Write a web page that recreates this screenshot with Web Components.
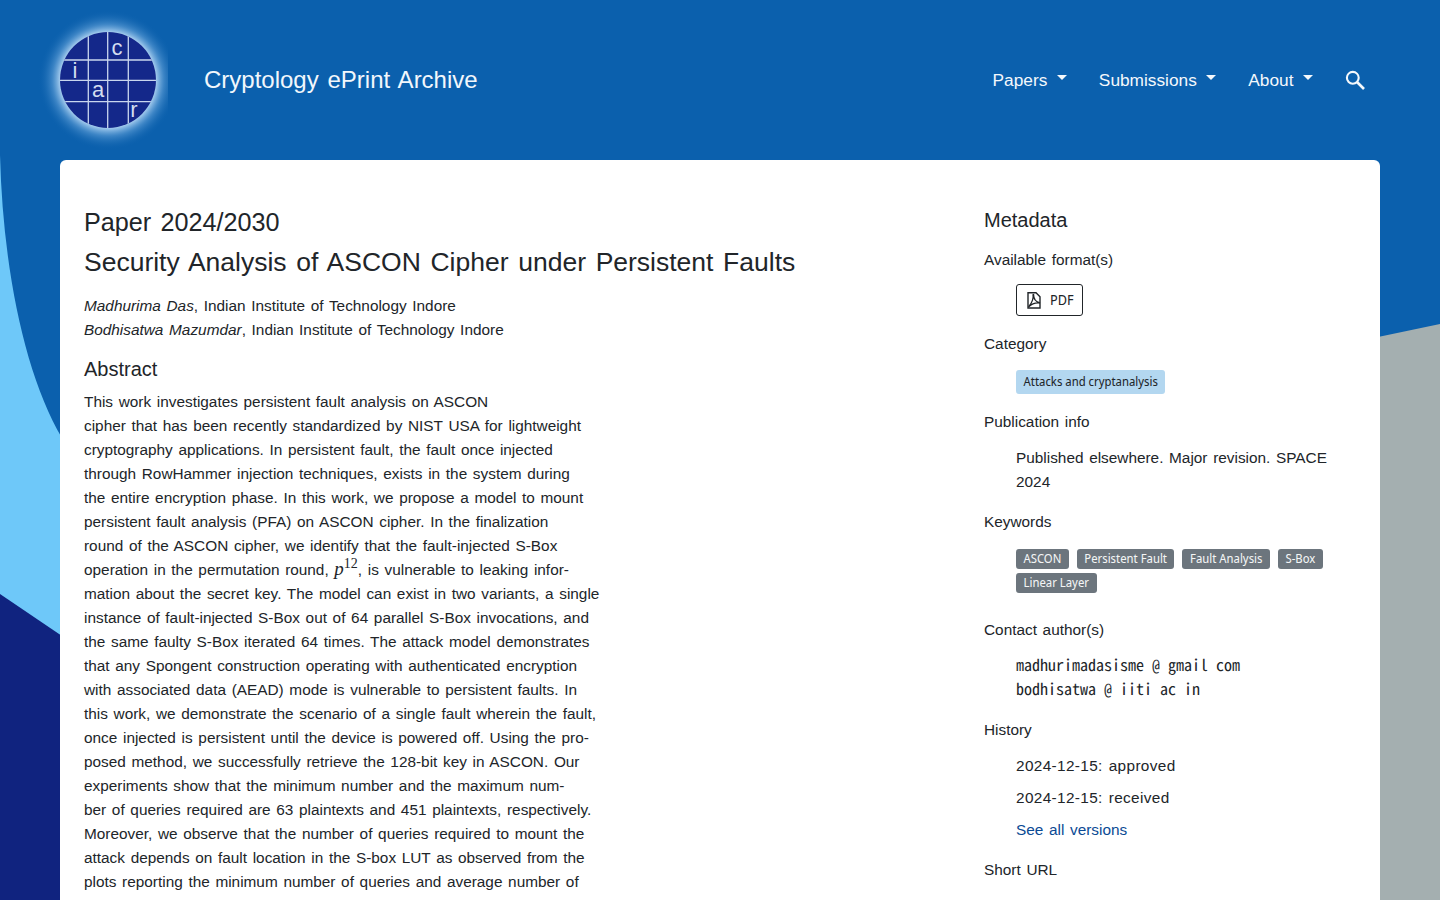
<!DOCTYPE html>
<html lang="en"><head><meta charset="utf-8"><title>Cryptology ePrint Archive</title>
<style>
html,body{margin:0;padding:0;height:900px;overflow:hidden}
body{background:#0b60ad;font-family:"Liberation Sans",Arial,sans-serif;font-size:15.36px;word-spacing:1.4px;line-height:24px;color:#212529;position:relative}
</style></head><body>
<template id="t-bg"><style>:host{position:absolute;inset:0;display:block;z-index:0}svg{display:block}</style>
<svg width="1440" height="900" viewBox="0 0 1440 900"><rect width="1440" height="900" fill="#0b60ad"/>
<path d="M0 155C3 270 25 375 62 438L62 640L0 596Z" fill="#6ec8f9"/>
<path d="M0 594L62 636V900H0Z" fill="#10237f"/>
<path d="M1378 337L1440 324V900H1378Z" fill="#a4afb0"/></svg></template>
<template id="t-logo"><style>:host{display:block;width:144px;height:160px;flex:none}svg{display:block}text{font-family:"Liberation Sans",Arial,sans-serif;fill:#d3ddf0;font-size:22px;text-anchor:middle}</style>
<svg width="144" height="160" viewBox="0 0 144 160"><defs><radialGradient id="g"><stop offset="0.68" stop-color="#a9cff0"/><stop offset="0.8" stop-color="#5d9dd6" stop-opacity=".6"/><stop offset="1" stop-color="#0b60ad" stop-opacity="0"/></radialGradient><clipPath id="c"><circle cx="84" cy="80" r="48"/></clipPath></defs>
<circle cx="84" cy="80" r="70" fill="url(#g)"/><circle cx="84" cy="80" r="48" fill="#14288a"/>
<g clip-path="url(#c)" stroke="#c9d6ee" stroke-width="1.3"><path d="M64.3 30V130M83.7 30V130M104.3 30V130M34 60H134M34 80.3H134M34 101.7H134"/></g>
<text x="93" y="55">c</text><text x="51" y="78">i</text><text x="74" y="97">a</text><text x="110" y="117">r</text></svg></template>
<template id="t-nav"><style>:host{display:inline-flex;align-items:center;color:#f4f8fc;font-size:17.3px;line-height:24px;word-spacing:0}
i{display:inline-block;margin-left:9.5px;width:0;height:0;border-top:5.3px solid #f4f8fc;border-left:5.3px solid transparent;border-right:5.3px solid transparent;position:relative;top:-3px}</style><slot></slot><i></i></template>
<template id="t-header"><style>:host{display:flex;align-items:center;height:160px;padding-left:24px;padding-right:75px;color:#fff}
.t{font-size:24px;word-spacing:2.1px;margin-left:36px;color:#f2f7fc}.r{margin-left:auto;display:flex;align-items:center;gap:32px}svg{display:block}</style>
<ac-logo></ac-logo><div class="t">Cryptology ePrint Archive</div><div class="r"><ac-nav>Papers</ac-nav><ac-nav>Submissions</ac-nav><ac-nav>About</ac-nav>
<svg width="20" height="20" viewBox="0 0 20 20" fill="none" stroke="#f4f8fc" stroke-width="2.1"><circle cx="7.8" cy="7.8" r="5.9"/><path d="M12 12L19 19" stroke-width="2.6"/></svg></div></template>
<template id="t-card"><style>:host{display:grid;grid-template-columns:900px 1fr;margin:0 60px;height:740px;box-sizing:border-box;background:#fff;border-radius:6px 6px 0 0;padding:48px 24px 0;overflow:hidden}
.a{min-width:0}</style><div class="a"><slot name="main"></slot></div><div><slot name="side"></slot></div></template>
<template id="t-main"><style>:host{display:block;margin-top:-2px}
h3{font-weight:400;margin:0;font-size:26.5px;word-spacing:2.3px;line-height:32px;padding-bottom:8px}h3.p{font-size:25.2px}
.au{margin:8px 0 16px}.au em{font-style:italic}
h5{font-weight:400;font-size:20px;line-height:24px;margin:-1px 0 9px}
.ab{white-space:pre-line;margin:0}
.m{font-family:"Liberation Serif",serif;font-style:italic;font-size:19px;line-height:0}.m sup{font-style:normal;font-size:14px;line-height:0;vertical-align:7px}</style>
<h3 class="p">Paper 2024/2030</h3><h3>Security Analysis of ASCON Cipher under Persistent Faults</h3>
<div class="au"><em>Madhurima Das</em>, Indian Institute of Technology Indore<br><em>Bodhisatwa Mazumdar</em>, Indian Institute of Technology Indore</div>
<h5>Abstract</h5>
<p class="ab">This work investigates persistent fault analysis on ASCON
cipher that has been recently standardized by NIST USA for lightweight
cryptography applications. In persistent fault, the fault once injected
through RowHammer injection techniques, exists in the system during
the entire encryption phase. In this work, we propose a model to mount
persistent fault analysis (PFA) on ASCON cipher. In the finalization
round of the ASCON cipher, we identify that the fault-injected S-Box
operation in the permutation round, <span class="m">p<sup>12</sup></span>, is vulnerable to leaking infor-
mation about the secret key. The model can exist in two variants, a single
instance of fault-injected S-Box out of 64 parallel S-Box invocations, and
the same faulty S-Box iterated 64 times. The attack model demonstrates
that any Spongent construction operating with authenticated encryption
with associated data (AEAD) mode is vulnerable to persistent faults. In
this work, we demonstrate the scenario of a single fault wherein the fault,
once injected is persistent until the device is powered off. Using the pro-
posed method, we successfully retrieve the 128-bit key in ASCON. Our
experiments show that the minimum number and the maximum num-
ber of queries required are 63 plaintexts and 451 plaintexts, respectively.
Moreover, we observe that the number of queries required to mount the
attack depends on fault location in the S-box LUT as observed from the
plots reporting the minimum number of queries and average number of
queries for fault.</p></template>
<template id="t-side"><style>:host{display:block}
h5{font-weight:400;font-size:20px;line-height:24px;margin:0 0 16px}
.l{height:24px}.d{margin:12px 0 16px 32px}
.b{display:inline-flex;align-items:center;gap:9px;border:1px solid #212529;border-radius:3px;height:30px;padding:0 8px 0 10px;font-family:"Noto Sans Display","Liberation Sans",sans-serif;font-size:13.5px}
.bd{display:inline-block;font-family:"Noto Sans Display","Liberation Sans",sans-serif;word-spacing:0;font-size:12px;line-height:12px;padding:4px 7.5px;border-radius:3px;margin:0 8px 4px 0;background:#6c757d;color:#f4f5f6;height:12px}
.bd.c{background:#b3d7f0;color:#212529;padding:6px 7.5px 6px;margin:0}
.kw{display:flex;flex-wrap:wrap;margin-top:15px;margin-bottom:21px}
.mono{font-family:"Noto Sans Mono CJK SC","DejaVu Sans Mono",monospace;font-size:16px;word-spacing:0;text-rendering:geometricPrecision;margin-top:10px;margin-bottom:18px}
a{color:#0a4a94;text-decoration:none}.h{margin-bottom:8px;letter-spacing:.35px}svg{display:block}</style>
<h5>Metadata</h5>
<div class="l">Available format(s)</div>
<div class="d"><span class="b"><svg width="14" height="17" viewBox="0 0 14 17" fill="none" stroke="#212529" stroke-width="1.4"><path d="M1 .8H9L13 4.8V16H1Z"/><path d="M6 2C7 7 4.5 11.5 1.5 15M6.5 2C6.5 7 9 10 13 11C9 10.5 5 11.5 1.5 15" stroke-width="1.3"/></svg>PDF</span></div>
<div class="l">Category</div>
<div class="d" style="margin-top:13px;margin-bottom:16px;height:25px"><span class="bd c">Attacks and cryptanalysis</span></div>
<div class="l">Publication info</div>
<div class="d" style="max-width:320px">Published elsewhere. Major revision. SPACE 2024</div>
<div class="l">Keywords</div>
<div class="d kw"><span class="bd">ASCON</span><span class="bd">Persistent Fault</span><span class="bd">Fault Analysis</span><span class="bd">S-Box</span><span class="bd">Linear Layer</span></div>
<div class="l">Contact author(s)</div>
<div class="d mono">madhurimadasisme @ gmail com<br>bodhisatwa @ iiti ac in</div>
<div class="l">History</div>
<div class="d"><div class="h">2024-12-15: approved</div><div class="h">2024-12-15: received</div><a href="#">See all versions</a></div>
<div class="l">Short URL</div>
<div class="d"><a href="#">https://ia.cr/2024/2030</a></div></template>

<ac-bg></ac-bg>
<div style="position:relative;z-index:1"><ac-header></ac-header>
<ac-card><ac-main slot="main"></ac-main><ac-side slot="side"></ac-side></ac-card></div>
<script>
for(const [n,t] of [['ac-bg','t-bg'],['ac-logo','t-logo'],['ac-nav','t-nav'],['ac-header','t-header'],['ac-card','t-card'],['ac-main','t-main'],['ac-side','t-side']]){
customElements.define(n,class extends HTMLElement{constructor(){super();this.attachShadow({mode:'open'}).appendChild(document.getElementById(t).content.cloneNode(true));}});}
</script></body></html>
